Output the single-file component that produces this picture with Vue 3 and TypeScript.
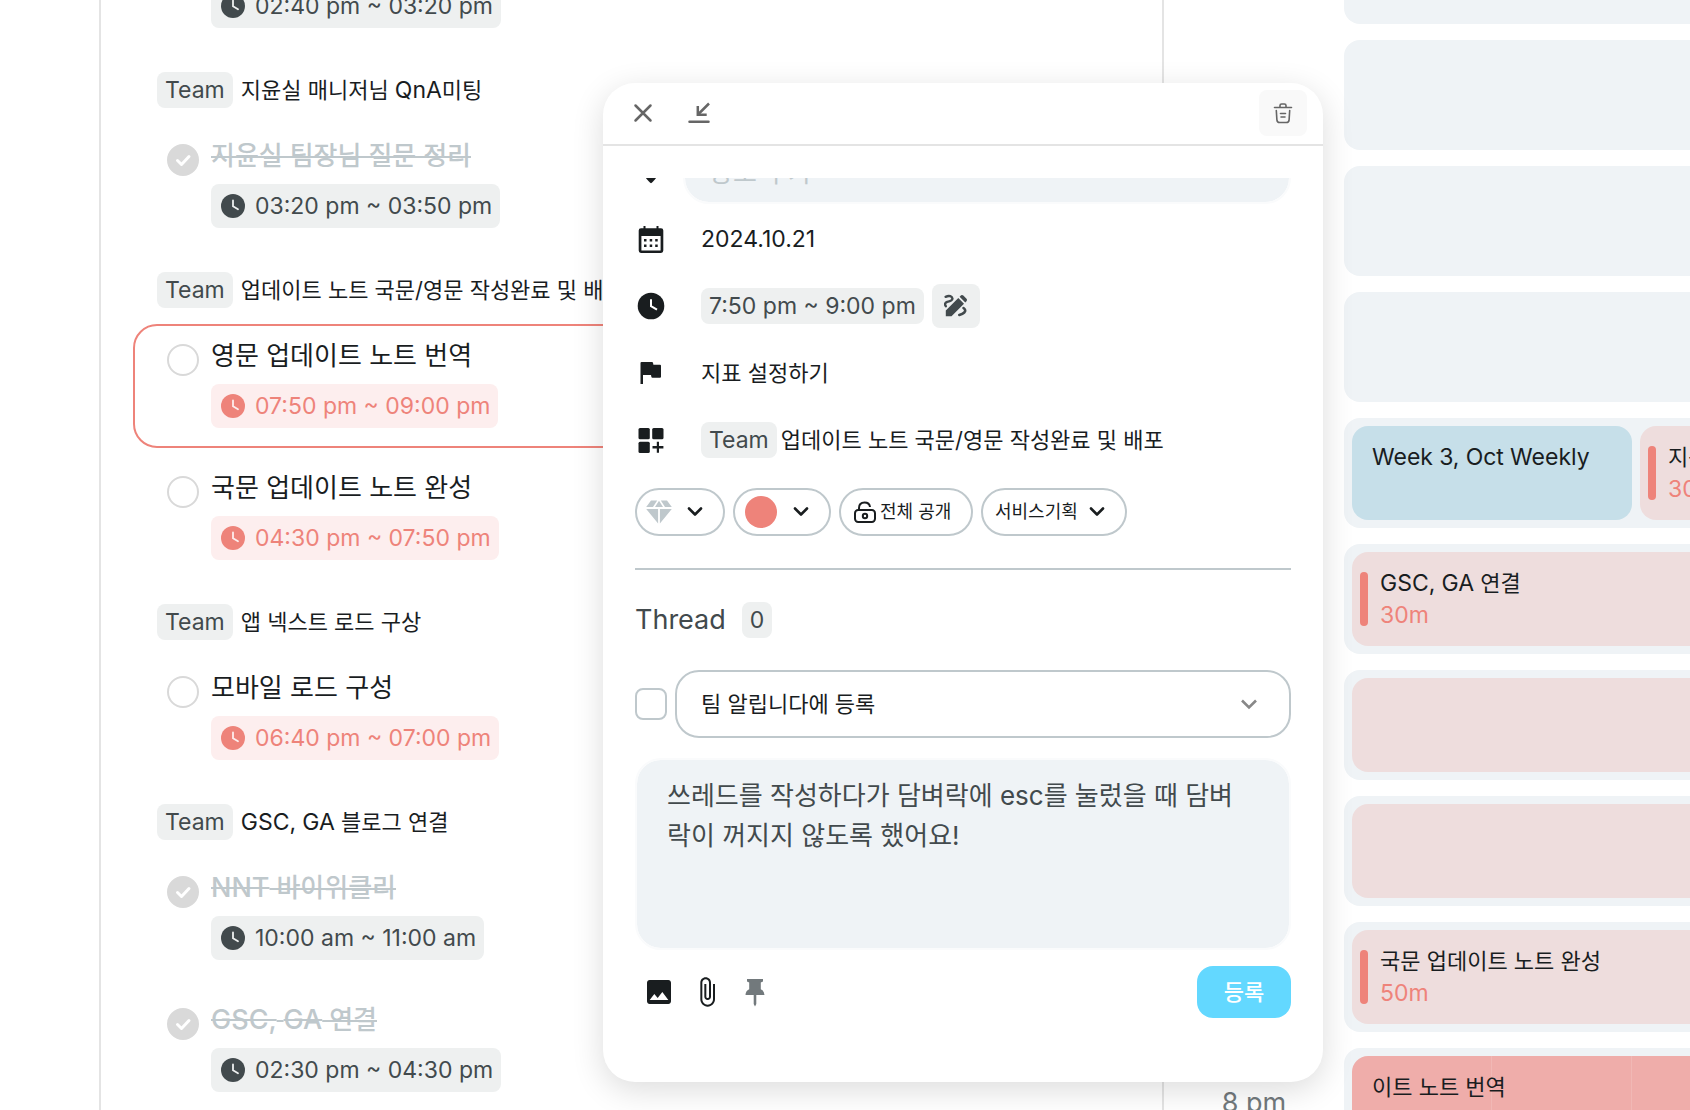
<script setup lang="ts">
import { ref } from 'vue'

interface Task {
  id: string
  title: string
  time: string
  done?: boolean
  late?: boolean
  selected?: boolean
}
interface Group {
  name?: string
  tasks: Task[]
}
interface Block {
  title?: string
  length?: string
  tone: 'blue' | 'pink' | 'red'
  bar?: boolean
  short?: boolean
}
interface Hour {
  label: string
  blocks: Block[]
}

const groups = ref<Group[]>([
  { tasks: [{ id: 't1', title: '지윤실 매니저님 미팅', time: '02:40 pm ~ 03:20 pm', done: true }] },
  {
    name: '지윤실 매니저님 QnA미팅',
    tasks: [{ id: 't2', title: '지윤실 팀장님 질문 정리', time: '03:20 pm ~ 03:50 pm', done: true }],
  },
  {
    name: '업데이트 노트 국문/영문 작성완료 및 배포',
    tasks: [
      { id: 't3', title: '영문 업데이트 노트 번역', time: '07:50 pm ~ 09:00 pm', late: true, selected: true },
      { id: 't4', title: '국문 업데이트 노트 완성', time: '04:30 pm ~ 07:50 pm', late: true },
    ],
  },
  {
    name: '앱 넥스트 로드 구상',
    tasks: [{ id: 't5', title: '모바일 로드 구성', time: '06:40 pm ~ 07:00 pm', late: true }],
  },
  {
    name: 'GSC, GA 블로그 연결',
    tasks: [
      { id: 't6', title: 'NNT 바이위클리', time: '10:00 am ~ 11:00 am', done: true },
      { id: 't7', title: 'GSC, GA 연결', time: '02:30 pm ~ 04:30 pm', done: true },
    ],
  },
])

const hours: Hour[] = [
  { label: '11 am', blocks: [] },
  { label: '12 pm', blocks: [] },
  { label: '1 pm', blocks: [] },
  { label: '2 pm', blocks: [] },
  {
    label: '3 pm',
    blocks: [
      { title: 'Week 3, Oct Weekly', tone: 'blue', short: true },
      { title: '지윤실 팀장님 질문 정리', length: '30m', tone: 'pink', bar: true },
    ],
  },
  { label: '4 pm', blocks: [{ title: 'GSC, GA 연결', length: '30m', tone: 'pink', bar: true }] },
  { label: '5 pm', blocks: [{ tone: 'pink' }] },
  { label: '6 pm', blocks: [{ tone: 'pink' }] },
  { label: '7 pm', blocks: [{ title: '국문 업데이트 노트 완성', length: '50m', tone: 'pink', bar: true }] },
  { label: '8 pm', blocks: [{ title: '이트 노트 번역', tone: 'red' }] },
]

const place = ref('')
const notice = ref(false)
const board = ref('팀 알립니다에 등록')
const job = ref('서비스기획')
const thread = ref('쓰레드를 작성하다가 담벼락에 esc를 눌렀을 때 담벼락이 꺼지지 않도록 했어요!')

/* Hangul glyphs are set a little smaller than Latin ones, so split a text by script. */
function runs(text: string) {
  return (text.match(/[ㄱ-힣/ ]+|[^ㄱ-힣/ ]+/g) ?? []).map((part) => ({
    part,
    ko: /[ㄱ-힣/ ]/.test(part),
  }))
}
</script>

<template>
  <div class="page">
    <main class="todo">
      <div class="todo-list">
        <section v-for="(g, gi) in groups" :key="gi" class="group">
          <header v-if="g.name" class="group-head">
            <span class="badge">Team</span>
            <span class="group-name"><span v-for="(r, i) in runs(g.name)" :key="i" :class="{ ko: r.ko }">{{ r.part }}</span></span>
          </header>
          <div class="tasks">
            <article v-for="t in g.tasks" :key="t.id" class="task" :class="{ selected: t.selected }">
              <input :id="t.id" v-model="t.done" type="checkbox" class="tick" />
              <div class="task-main">
                <label :for="t.id" class="task-title" :class="{ done: t.done }"><span v-for="(r, i) in runs(t.title)" :key="i" :class="{ ko: r.ko }">{{ r.part }}</span></label>
                <div class="time" :class="{ late: t.late }">
                  <svg viewBox="0 0 28 28" width="28" height="28" aria-hidden="true">
                    <circle cx="14" cy="14" r="12" fill="currentColor" />
                    <path d="M14 8.5v5.8l5 3" fill="none" :stroke="t.late ? '#fdeeee' : '#eef0f0'" stroke-width="1.8" stroke-linecap="round" />
                  </svg>
                  <span>{{ t.time }}</span>
                </div>
              </div>
            </article>
          </div>
        </section>
      </div>
    </main>

    <aside class="schedule">
      <div class="hours">
        <div v-for="h in hours" :key="h.label" class="hour">
          <span class="hour-label">{{ h.label }}</span>
          <div class="slot">
            <div v-for="(b, bi) in h.blocks" :key="bi" class="block" :class="[b.tone, { short: b.short }]">
              <i v-if="b.bar" class="bar"></i>
              <div v-if="b.title" class="block-text">
                <span class="block-title"><span v-for="(r, i) in runs(b.title)" :key="i" :class="{ ko: r.ko }">{{ r.part }}</span></span>
                <span v-if="b.length" class="block-length">{{ b.length }}</span>
              </div>
            </div>
          </div>
        </div>
      </div>
    </aside>

    <section class="modal" role="dialog" aria-label="업무 상세">
      <header class="modal-head">
        <button type="button" class="head-btn" aria-label="닫기">
          <svg viewBox="0 0 24 24" width="24" height="24"><path d="M4.500 4.500l15 15M19.500 4.500l-15 15" fill="none" stroke="#666" stroke-width="2.500" stroke-linecap="round" /></svg>
        </button>
        <button type="button" class="head-btn" aria-label="최소화">
          <svg viewBox="0 0 24 24" width="24" height="24" fill="none" stroke="#666" stroke-width="2.500"><path d="M22 2.500L11.500 13" /><path d="M10.800 5v8.700h8.900" /><path d="M2.500 20.800h19" stroke-linecap="round" /></svg>
        </button>
        <button type="button" class="head-btn trash" aria-label="삭제">
          <svg viewBox="0 0 24 24" width="24" height="24" fill="none" stroke="#666" stroke-width="1.600" stroke-linecap="round"><path d="M3.500 6.500h17M9 6V4.600Q9 3 10.600 3h2.800Q15 3 15 4.600V6M5.300 9.500l.6 9.400q.2 2.600 2.800 2.600h6.600q2.600 0 2.800-2.600l.6-9.400M9.500 12.500h5M10 16h4" /></svg>
        </button>
      </header>

      <div class="modal-body">
        <div class="details">
          <div class="row place">
            <svg class="row-icon" viewBox="0 0 24 24" width="32" height="32" fill="#191d1f"><path d="M12 2a7 7 0 0 0-7 7c0 4.600 5 10 7 11.500 2-1.500 7-6.900 7-11.500a7 7 0 0 0-7-7z" /></svg>
            <input v-model="place" type="text" placeholder="장소 추가" aria-label="장소 추가" />
          </div>
          <div class="row">
            <svg class="row-icon" viewBox="0 0 32 32" width="32" height="32"><path fill="#191d1f" fill-rule="evenodd" d="M8.500 3h2v2.300h11V3h2v2.300H26q2.300 0 2.300 2.300v20Q28.300 30 26 30H6q-2.300 0-2.300-2.400v-20Q3.700 5.300 6 5.300h2.500zM6.400 13v14.400h19.200V13zM9 16h2.500v2.500H9zm5.700 0h2.500v2.500h-2.500zm5.500 0h2.500v2.500h-2.500zM9 21.500h2.500V24H9zm5.700 0h2.500V24h-2.500zm5.500 0h2.500V24h-2.500z" /></svg>
            <span class="value">2024.10.21</span>
          </div>
          <div class="row">
            <svg class="row-icon" viewBox="0 0 32 32" width="32" height="32"><circle cx="16" cy="16" r="13.300" fill="#191d1f" /><path d="M16 9.300v6.900l6 3.500" fill="none" stroke="#fff" stroke-width="2" /></svg>
            <span class="range"><span class="badge">7:50 pm ~ 9:00 pm</span>
              <button type="button" class="edit" aria-label="시간 수정">
                <svg viewBox="0 0 24 24" width="24" height="24"><path d="M1.800 22.200v-5.700L14.300 4l5.700 5.700L7.500 22.200zM15.600 2.700l1.500-1.400q1.100-.8 2.200.2l3.200 3.200q1 1.100.2 2.200l-1.400 1.500z" fill="#424a4d" /><path d="M1.800 12.200q-2-3 1.400-4.400 5.500-1.300 5.200-3.300C8 2.500 5.500 1 1.600 2.800" fill="none" stroke="#424a4d" stroke-width="2.400" stroke-linecap="round" /><path d="M19.500 14q3 2 .8 4.500-1.500 1.500-5 2.500" fill="none" stroke="#424a4d" stroke-width="2.600" stroke-linecap="round" /></svg>
              </button>
            </span>
          </div>
          <div class="row">
            <svg class="row-icon" viewBox="0 0 32 32" width="32" height="32"><path fill="#191d1f" d="M5.500 6q0-1 1-1H17q.8 0 1 .8l.4 1.900H25q1 0 1 1v11q0 1-1 1h-7.600q-.8 0-1-.8l-.4-1.900H8V27H5.500z" /></svg>
            <span class="value ko">지표 설정하기</span>
          </div>
          <div class="row">
            <svg class="row-icon" viewBox="0 0 32 32" width="32" height="32" fill="#191d1f"><rect x="3.500" y="4" width="11.300" height="11.300" rx="1.500" /><rect x="17.200" y="4" width="11.300" height="11.300" rx="1.500" /><rect x="3.500" y="17.700" width="11.300" height="11.300" rx="1.500" /><path d="M21.800 17.800h2.200v4.300h4.400v2.300H24v4.300h-2.200v-4.300h-4.300v-2.300h4.300z" /></svg>
            <span class="team"><span class="badge">Team</span><span class="ko">업데이트 노트 국문/영문 작성완료 및 배포</span></span>
          </div>
        </div>

        <div class="chips">
          <button type="button" class="chip gem" aria-label="중요도">
            <svg viewBox="0 0 28 28" width="28" height="28" fill="#bfc8cc"><path d="M6 2.500h6.200L8 9H1.200zM15.800 2.500H22L26.800 9H20zM14 2.800L18 9h-8zM1.200 11h11.900v14.500zM14.900 11h11.900L14.900 25.500z" /></svg>
            <svg class="chev" viewBox="0 0 20 20" width="20" height="20"><path d="M4 6.500l6 6 6-6" /></svg>
          </button>
          <button type="button" class="chip color" aria-label="색상">
            <i class="dot"></i>
            <svg class="chev" viewBox="0 0 20 20" width="20" height="20"><path d="M4 6.500l6 6 6-6" /></svg>
          </button>
          <button type="button" class="chip open">
            <svg viewBox="0 0 24 24" width="24" height="24" fill="none" stroke="#191d1f" stroke-width="2"><rect x="2" y="10" width="20" height="12" rx="3.200" /><path d="M6 10V8q0-5.500 5.500-5.500Q16.500 2.500 17 7" /><circle cx="12" cy="16" r="2.200" /></svg>
            <span>전체 공개</span>
          </button>
          <span class="chip picker">
            <select v-model="job" aria-label="직무"><option>서비스기획</option></select>
            <svg class="chev" viewBox="0 0 20 20" width="20" height="20"><path d="M4 6.500l6 6 6-6" /></svg>
          </span>
        </div>

        <hr />

        <h2 class="thread-title">Thread <span class="badge">0</span></h2>

        <div class="notice">
          <input v-model="notice" type="checkbox" class="square" aria-label="팀 알립니다에 등록" />
          <span class="picker board">
            <select v-model="board" aria-label="게시판"><option>팀 알립니다에 등록</option></select>
            <svg class="chev" viewBox="0 0 20 20" width="20" height="20"><path d="M3 6.500l7 7 7-7" /></svg>
          </span>
        </div>

        <textarea v-model="thread" aria-label="쓰레드 작성"></textarea>

        <footer class="tools">
          <button type="button" class="tool" aria-label="이미지">
            <svg viewBox="0 0 24 24" width="32" height="32" fill="#191d1f"><path d="M21 19V5c0-1.100-.9-2-2-2H5c-1.100 0-2 .9-2 2v14c0 1.100.9 2 2 2h14c1.100 0 2-.9 2-2zM8.500 13.500l2.500 3.010L14.500 12l4.500 6H5l3.500-4.500z" /></svg>
          </button>
          <button type="button" class="tool" aria-label="파일 첨부">
            <svg viewBox="0 0 24 24" width="32" height="32" fill="#191d1f"><path d="M16.500 6v11.500c0 2.210-1.790 4-4 4s-4-1.790-4-4V5c0-1.380 1.120-2.500 2.500-2.500s2.500 1.120 2.500 2.500v10.500c0 .55-.45 1-1 1s-1-.45-1-1V6H10v9.500c0 1.380 1.120 2.500 2.500 2.500s2.500-1.120 2.500-2.500V5c0-2.210-1.790-4-4-4S7 2.790 7 5v12.500c0 3.040 2.460 5.500 5.500 5.500s5.500-2.460 5.500-5.500V6h-1.500z" /></svg>
          </button>
          <button type="button" class="tool" aria-label="고정">
            <svg viewBox="0 0 32 32" width="32" height="32" fill="#72797c"><path d="M8 3h16v2.500l-2.200 1v6.700q3.700 1.800 3.700 5.800h-8.200v9L16 30.500 14.700 28v-9H6.500q0-4 3.700-5.800V6.500L8 5.500z" /></svg>
          </button>
          <button type="submit" class="submit">등록</button>
        </footer>
      </div>
    </section>
  </div>
</template>

<style>
body {
  overflow: hidden;
}
</style>

<style scoped>
* {
  box-sizing: border-box;
}
.page {
  position: relative;
  display: grid;
  grid-template-columns: minmax(0, 1065fr) minmax(0, 526fr);
  height: 100vh;
  padding-left: 99px;
  overflow: hidden;
  background: #fff;
  color: #191d1f;
  font-family: Inter, 'Noto Sans CJK KR', sans-serif;
  font-size: 23px;
  line-height: 36px;
}
button,
input,
select,
textarea {
  margin: 0;
  padding: 0;
  border: 0;
  background: none;
  color: inherit;
  font: inherit;
}
svg {
  display: block;
  flex: none;
}
.ko {
  font-size: 22px;
}
.badge {
  flex: none;
  height: 36px;
  padding: 0 8px;
  border-radius: 8px;
  background: #eef0f0;
  color: #424a4d;
  font-size: 23px;
}

/* task list */
.todo {
  overflow: hidden;
  border: solid #e4e4e4;
  border-width: 0 2px;
}
.todo-list {
  display: flex;
  flex-direction: column;
  gap: 24px;
  margin: -76px 32px 0;
}
.group {
  display: flex;
  flex-direction: column;
  gap: 16px;
}
.group-head {
  display: flex;
  gap: 8px;
  height: 36px;
  padding-left: 24px;
  white-space: nowrap;
}
.tasks {
  display: flex;
  flex-direction: column;
  gap: 8px;
}
.task {
  display: flex;
  gap: 12px;
  height: 124px;
  padding: 10px 32px;
  border: 2px solid transparent;
  border-radius: 24px;
}
.task.selected {
  border-color: #ee837a;
}
.tick {
  flex: none;
  width: 32px;
  height: 32px;
  margin-top: 8px;
  appearance: none;
  border: 2px solid #d9d9d9;
  border-radius: 50%;
}
.tick:checked {
  background: #d9d9d9 url("data:image/svg+xml,%3Csvg xmlns='http://www.w3.org/2000/svg' viewBox='0 0 28 28'%3E%3Cpath d='M8.500 14.500l4 4 7.500-8' fill='none' stroke='%23fff' stroke-width='3' stroke-linecap='round' stroke-linejoin='round'/%3E%3C/svg%3E") center / 28px 28px no-repeat;
}
.task-main {
  display: flex;
  flex-direction: column;
  align-items: flex-start;
  gap: 8px;
}
.task-title {
  height: 40px;
  font-size: 27px;
  line-height: 40px;
  white-space: nowrap;
}
.task-title .ko {
  font-size: 26px;
}
.task-title.done {
  color: #bfc8cc;
  font-weight: 500;
  text-decoration: line-through 2px;
  text-decoration-skip-ink: none;
}
.time {
  display: flex;
  align-items: center;
  gap: 8px;
  height: 44px;
  padding: 0 8px;
  border-radius: 8px;
  background: #eef0f0;
  color: #424a4d;
}
.time.late {
  background: #fdeeee;
  color: #ee837a;
}

/* timetable */
.schedule {
  overflow: hidden;
}
.hours {
  display: flex;
  flex-direction: column;
  gap: 16px;
  margin-top: -86px;
}
.hour {
  display: grid;
  grid-template-columns: 180px 840px;
  align-items: center;
}
.hour-label {
  color: #72797c;
  font-size: 27px;
  text-align: center;
}
.slot {
  display: flex;
  gap: 8px;
  height: 110px;
  padding: 8px;
  border-radius: 16px;
  background: #eff3f6;
}
.block {
  display: flex;
  flex: 1;
  gap: 12px;
  padding: 15px 8px;
  border-radius: 16px;
  line-height: 32px;
  white-space: nowrap;
}
.block.short {
  flex: 0 0 280px;
}
.block.blue {
  padding-left: 20px;
  background: #c6dfe9;
}
.block.pink {
  background: #eedddd;
}
.block.red {
  padding-left: 20px;
  background: repeating-linear-gradient(90deg, #efadaa 0 139px, #f1b8b5 139px 140px);
}
.bar {
  width: 8px;
  height: 54px;
  margin-top: 5px;
  border-radius: 4px;
  background: #ee837a;
}
.block-text {
  display: flex;
  flex-direction: column;
}
.block-title {
  height: 32px;
}
.block-length {
  color: #ee837a;
}

/* detail window */
.modal {
  position: absolute;
  top: 83px;
  left: 603px;
  width: 720px;
  border-radius: 32px;
  background: #fff;
  box-shadow: 0 8px 32px rgba(0, 0, 0, 0.14);
}
.modal-head {
  display: flex;
  align-items: center;
  gap: 8px;
  height: 63px;
  padding: 0 16px 2px;
  border-bottom: 2px solid #e4e4e4;
}
.head-btn {
  display: grid;
  place-items: center;
  width: 48px;
  height: 46px;
  border-radius: 8px;
}
.trash {
  margin-left: auto;
  background: #f9f9f9;
}
.modal-body {
  padding: 32px 32px 64px;
}
.details {
  display: flex;
  flex-direction: column;
  justify-content: flex-end;
  gap: 23px;
  height: 284px;
  overflow: hidden;
}
.row {
  display: flex;
  flex: none;
  align-items: center;
  gap: 34px;
  height: 44px;
}
.row.place {
  gap: 16px;
  height: 64px;
  margin-bottom: -10px;
}
.place input {
  flex: 1;
  height: 64px;
  padding: 0 24px;
  border: 2px solid #fafbfc;
  border-radius: 26px;
  background: #eff3f6;
  background-clip: padding-box;
  font-size: 26px;
}
.place input::placeholder {
  color: #bfc8cc;
}
.range {
  display: flex;
  align-items: center;
  gap: 8px;
}
.edit {
  display: grid;
  place-items: center;
  width: 48px;
  height: 44px;
  border-radius: 8px;
  background: #eef0f0;
}
.team {
  display: flex;
  gap: 4px;
}
.chips {
  display: flex;
  gap: 8px;
  height: 48px;
  margin-top: 26px;
}
.chip {
  display: flex;
  align-items: center;
  border: 2px solid #bfc8cc;
  border-radius: 24px;
  font-size: 18px;
}
.chev {
  fill: none;
  stroke: #191d1f;
  stroke-width: 2.6;
  stroke-linecap: round;
  stroke-linejoin: round;
}
.gem {
  gap: 12px;
  width: 90px;
  padding-left: 8px;
}
.color {
  gap: 14px;
  width: 98px;
  padding-left: 10px;
}
.dot {
  width: 32px;
  height: 32px;
  border-radius: 50%;
  background: #ee837a;
}
.open {
  gap: 3px;
  width: 134px;
  padding-left: 12px;
}
.picker {
  display: grid;
  align-items: center;
}
.picker > * {
  grid-area: 1 / 1;
}
.picker select {
  width: 100%;
  height: 100%;
  appearance: none;
}
.picker .chev {
  justify-self: end;
  pointer-events: none;
}
.chip.picker {
  width: 146px;
}
.chip.picker select {
  padding-left: 12px;
}
.chip.picker .chev {
  margin-right: 18px;
}
hr {
  height: 2px;
  margin: 32px 0;
  border: 0;
  background: #bfc8cc;
}
.thread-title {
  display: flex;
  align-items: center;
  gap: 16px;
  height: 36px;
  margin: 0;
  color: #424a4d;
  font-size: 27px;
  font-weight: 400;
}
.notice {
  display: flex;
  align-items: center;
  gap: 8px;
  margin-top: 32px;
}
.square {
  width: 32px;
  height: 32px;
  appearance: none;
  border: 2px solid #bfc8cc;
  border-radius: 8px;
}
.square:checked {
  background: #bfc8cc;
}
.board {
  flex: 1;
  height: 68px;
  border: 2px solid #bfc8cc;
  border-radius: 24px;
}
.board select {
  padding: 0 24px;
  font-size: 22px;
}
.board .chev {
  margin-right: 30px;
  stroke: #888;
  stroke-linecap: butt;
  stroke-linejoin: miter;
}
textarea {
  display: block;
  width: 100%;
  height: 192px;
  margin-top: 20px;
  padding: 16px 36px 16px 30px;
  border: 2px solid #fafbfc;
  border-radius: 26px;
  background: #eff3f6;
  background-clip: padding-box;
  color: #424a4d;
  font-size: 26px;
  line-height: 40px;
  overflow: hidden;
  resize: none;
}
.tools {
  display: flex;
  align-items: center;
  gap: 16px;
  margin-top: 16px;
  padding-left: 8px;
}
.submit {
  width: 94px;
  height: 52px;
  margin-left: auto;
  border-radius: 16px;
  background: #63d8ff;
  color: #fff;
  font-size: 22px;
  font-weight: 500;
}
</style>
